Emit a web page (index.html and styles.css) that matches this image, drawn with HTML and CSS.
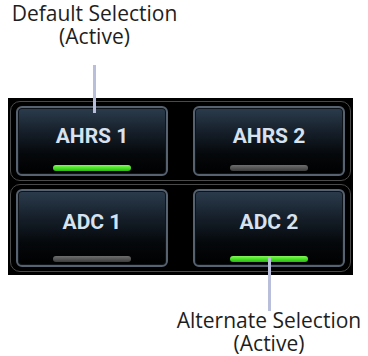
FILE: index.html
```html
<!DOCTYPE html>
<html>
<head>
<meta charset="utf-8">
<link rel="stylesheet" href="styles.css">
</head>
<body>
<div class="page">
  <div class="callout callout-top">
    <div class="label">Default Selection<br>(Active)</div>
    <div class="stem stem-top"></div>
  </div>
  <div class="panel">
    <div class="group row-1">
      <div class="btn"><span class="btn-text">AHRS 1</span><span class="bar bar-on"></span></div>
      <div class="btn"><span class="btn-text">AHRS 2</span><span class="bar bar-off"></span></div>
    </div>
    <div class="group row-2">
      <div class="btn"><span class="btn-text">ADC 1</span><span class="bar bar-off"></span></div>
      <div class="btn"><span class="btn-text">ADC 2</span><span class="bar bar-on"></span></div>
    </div>
  </div>
  <div class="callout callout-bottom">
    <div class="stem stem-bottom"></div>
    <div class="label">Alternate Selection<br>(Active)</div>
  </div>
</div>
</body>
</html>
```
FILE: styles.css
```css
html, body {
  margin: 0;
  padding: 0;
  background: #ffffff;
}

.page {
  width: 368px;
  height: 356px;
  overflow: hidden;
  font-family: "Open Sans", "Noto Sans", sans-serif;
}

.callout {
  display: flex;
  flex-direction: column;
  align-items: center;
}

.callout-top {
  width: 189px;
  padding-top: 2px;
}

.callout-bottom {
  width: 198px;
  margin-left: 170px;
}

.label {
  font-size: 21px;
  line-height: 23px;
  color: #1e1e1e;
  text-align: center;
  white-space: nowrap;
}

.stem {
  width: 3px;
  background: #b9bedb;
  position: relative;
  z-index: 1;
}

.stem-top {
  height: 48px;
  margin-top: 17px;
  margin-bottom: -15px;
}

.stem-bottom {
  height: 54px;
  margin-top: -18px;
  margin-bottom: -2px;
}

.panel {
  margin-left: 8px;
  width: 345px;
  background: #000000;
  padding: 3px 2px;
  box-sizing: border-box;
  display: flex;
  flex-direction: column;
  gap: 3px;
}

.group {
  border: 1px solid #4a4a4a;
  border-radius: 10px;
  padding: 4px 5px;
  display: grid;
  grid-template-columns: 152px 152px;
  column-gap: 25px;
}

.btn {
  box-sizing: border-box;
  border: 2px solid #56626f;
  border-radius: 6px;
  background: linear-gradient(to bottom, #2c3c4d 0%, #16202b 35%, #05080b 70%, #000000 100%);
  box-shadow: inset 0 0 0 1px #0d1318;
  display: flex;
  flex-direction: column;
  align-items: center;
  padding-bottom: 3px;
}

.row-1 .btn {
  height: 70px;
  padding-top: 16px;
}

.row-2 .btn {
  height: 78px;
  padding-top: 19px;
}

.btn-text {
  font-family: Roboto, "Open Sans", sans-serif;
  font-weight: 700;
  font-size: 21px;
  line-height: 24px;
  color: #d6e2ef;
}

.bar {
  margin-top: auto;
  width: 78px;
  height: 6px;
  border-radius: 3px;
}

.bar-on {
  background: linear-gradient(to bottom, #86f55a 0%, #4ee62a 45%, #2ab814 100%);
}

.bar-off {
  background: linear-gradient(to bottom, #6e6e6e 0%, #555555 50%, #3c3c3c 100%);
}
```
